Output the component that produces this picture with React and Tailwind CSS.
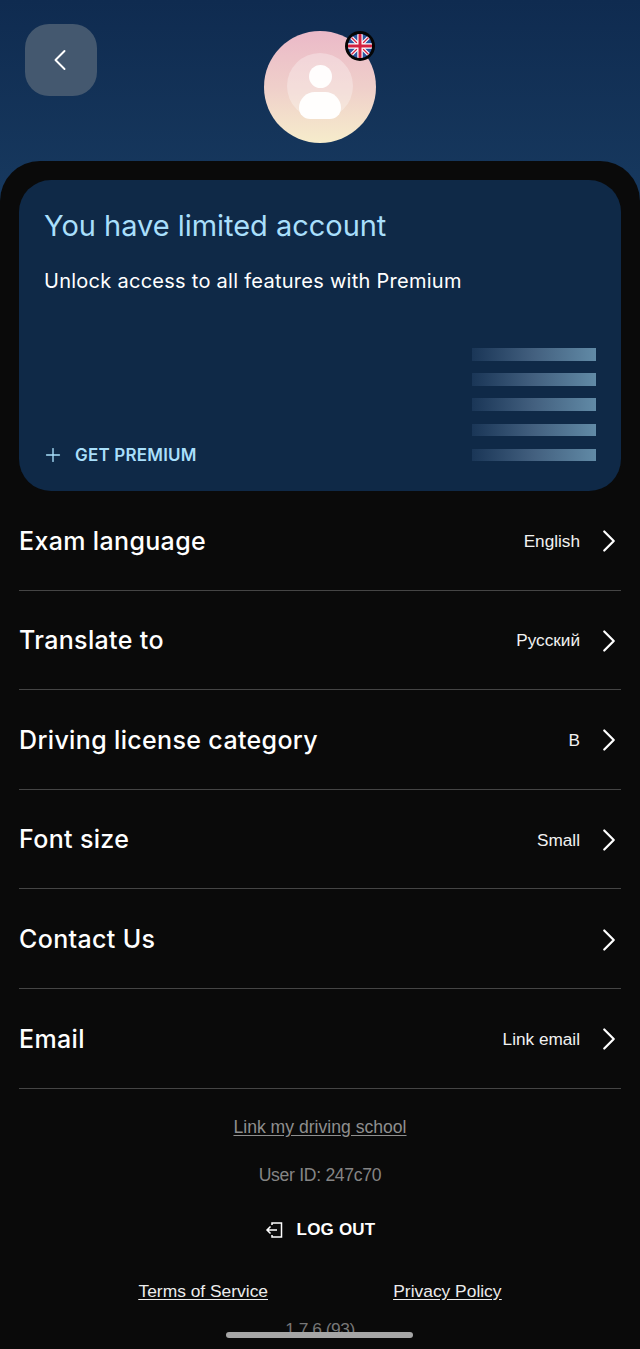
import React from "react";
import { ChevronLeft, ChevronRight, Plus } from "lucide-react";

const inter = "font-['Inter',sans-serif]";
const helv = "font-['Liberation_Sans',Arial,sans-serif]";

const rows = [
  { label: "Exam language", value: "English" },
  { label: "Translate to", value: "Русский" },
  { label: "Driving license category", value: "B" },
  { label: "Font size", value: "Small" },
  { label: "Contact Us" },
  { label: "Email", value: "Link email" },
];

function UkFlag() {
  return (
    <svg viewBox="0 0 30 30" className="h-full w-full">
      <defs>
        <clipPath id="flag-circle">
          <circle cx="15" cy="15" r="12" />
        </clipPath>
      </defs>
      <circle cx="15" cy="15" r="15" fill="#050505" />
      <g clipPath="url(#flag-circle)">
        <rect width="30" height="30" fill="#2b559f" />
        <path d="M2 2 28 28M28 2 2 28" stroke="#fff" strokeWidth="3.6" />
        <path d="M2 2 28 28M28 2 2 28" stroke="#d3213f" strokeWidth="1.3" />
        <path d="M15 0V30M0 15H30" stroke="#fff" strokeWidth="5.4" />
        <path d="M15 0V30M0 15H30" stroke="#d3213f" strokeWidth="3" />
      </g>
    </svg>
  );
}

function Avatar() {
  return (
    <div className="relative h-[112px] w-[112px] rounded-full bg-gradient-to-b from-[#ebb9c8] via-[#efcfca] to-[#f6eccb]">
      <div className="absolute left-[23px] top-[22px] flex h-[66px] w-[66px] flex-col items-center rounded-full bg-white/30 pt-[12px]">
        <div className="h-[23px] w-[23px] rounded-full bg-white/95" />
        <div className="mt-[4px] h-[27px] w-[42px] rounded-t-[20px] rounded-b-[14px] bg-white/95" />
      </div>
      <div className="absolute left-[81px] top-0 h-[30px] w-[30px]">
        <UkFlag />
      </div>
    </div>
  );
}

function StripeBars() {
  return (
    <div className="mb-[5px] flex w-[124px] flex-col gap-[12.7px]">
      {[0, 1, 2, 3, 4].map((i) => (
        <div key={i} className="h-[12.4px] bg-gradient-to-r from-[#1a3657] via-[#43607f] to-[#618aa6]" />
      ))}
    </div>
  );
}

function SettingRow({ label, value }) {
  return (
    <div className="flex h-[99.6px] items-center justify-between border-b border-[#454545] pt-[2px]">
      <span className={`${inter} text-[25px] font-medium tracking-[0.35px] text-white`}>{label}</span>
      <div className="flex items-center">
        {value ? <span className={`${helv} mt-[1px] text-[17.2px] text-[#f2f2f2]`}>{value}</span> : null}
        <ChevronRight className="ml-[10px] mr-[-7px] h-[38px] w-[38px] text-white" strokeWidth={1.4} />
      </div>
    </div>
  );
}

function LogoutIcon() {
  return (
    <svg viewBox="0 0 18 16" className="h-[16px] w-[18px]" fill="none" stroke="#fff" strokeWidth="1.5">
      <path d="M7 3V1H16.5V15H7V13" />
      <path d="M12 8H2M5.5 4.5 2 8l3.5 3.5" />
    </svg>
  );
}

export default function App() {
  return (
    <div className="relative h-[1349px] w-[640px] overflow-hidden bg-[linear-gradient(#0f2b50,#17395f_200px)]">
      <header className="grid h-[161px] grid-cols-[1fr_112px_1fr] items-start">
        <button type="button" className="ml-[25px] mt-[24px] flex h-[72px] w-[72px] items-center justify-center rounded-[24px] bg-[#44586f]">
          <ChevronLeft className="mr-[2px] h-[36px] w-[36px] text-white" strokeWidth={1.3} />
        </button>
        <div className="mt-[31px]">
          <Avatar />
        </div>
      </header>

      <main className="h-[1188px] rounded-t-[40px] bg-[#0a0a0a] px-[19px] pt-[19px]">
        <section className="flex h-[311px] flex-col rounded-[32px] bg-[#0f2947] pb-[25px] pl-[25px] pr-[25px] pt-[27px]">
          <h1 className={`${inter} text-[29px] leading-[38px] tracking-[-0.03px] text-[#a9dffb]`}>You have limited account</h1>
          <p className={`${inter} mt-[22px] text-[20px] leading-[28px] tracking-[0.27px] text-white`}>
            Unlock access to all features with Premium
          </p>
          <div className="mt-auto flex items-end justify-between">
            <div className="flex items-center">
              <Plus className="ml-[-2px] h-[22px] w-[22px] text-[#a9dffb]" strokeWidth={1.5} />
              <span className={`${inter} ml-[11px] text-[17px] font-semibold leading-[18px] tracking-[0.2px] text-[#a9dffb]`}>GET PREMIUM</span>
            </div>
            <StripeBars />
          </div>
        </section>

        <div>
          {rows.map((row) => (
            <SettingRow key={row.label} label={row.label} value={row.value} />
          ))}
        </div>

        <footer className={`${helv} flex flex-col items-center`}>
          <a className="mt-[27px] text-[17.6px] leading-[22px] text-[#8f8f8f] underline underline-offset-2">Link my driving school</a>
          <p className="mt-[26px] text-[17.6px] leading-[22px] tracking-[-0.3px] text-[#858585]">User ID: 247c70</p>
          <button type="button" className="mt-[33px] flex items-center gap-[14px] text-white">
            <LogoutIcon />
            <span className="text-[17px] font-bold leading-[22px] tracking-[0.2px]">LOG OUT</span>
          </button>
          <div className="mt-[39px] flex w-[363px] justify-between text-[17.4px] leading-[22px] text-[#ededed] underline underline-offset-2">
            <a>Terms of Service</a>
            <a>Privacy Policy</a>
          </div>
          <p className="mt-[16px] text-[17.4px] leading-[22px] tracking-[-0.5px] text-[#777777]">1.7.6 (93)</p>
        </footer>
      </main>

      <div className="absolute bottom-[11px] left-[226px] h-[6px] w-[187px] rounded-full bg-[#a6a6a6]" />
    </div>
  );
}
